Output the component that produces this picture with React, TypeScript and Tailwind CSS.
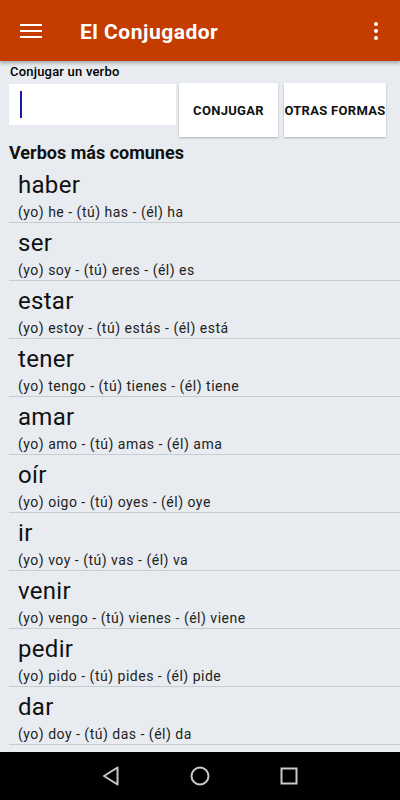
import React from "react";

const verbs = [
  { name: "haber", forms: "(yo) he - (tú) has - (él) ha" },
  { name: "ser", forms: "(yo) soy - (tú) eres - (él) es" },
  { name: "estar", forms: "(yo) estoy - (tú) estás - (él) está" },
  { name: "tener", forms: "(yo) tengo - (tú) tienes - (él) tiene" },
  { name: "amar", forms: "(yo) amo - (tú) amas - (él) ama" },
  { name: "oír", forms: "(yo) oigo - (tú) oyes - (él) oye" },
  { name: "ir", forms: "(yo) voy - (tú) vas - (él) va" },
  { name: "venir", forms: "(yo) vengo - (tú) vienes - (él) viene" },
  { name: "pedir", forms: "(yo) pido - (tú) pides - (él) pide" },
  { name: "dar", forms: "(yo) doy - (tú) das - (él) da" },
];

export default function App() {
  return (
    <div
      className="flex h-[800px] w-[400px] flex-col overflow-hidden bg-[#e8ecf0]"
      style={{ fontFamily: "Roboto, 'Noto Sans', sans-serif" }}
    >
      {/* toolbar */}
      <header className="relative z-10 flex h-[61px] shrink-0 items-center bg-[#c43c00] shadow-[0_2px_4px_rgba(0,0,0,0.3)]">
        <div className="ml-[20px] flex w-[22px] flex-col gap-[4px]">
          <span className="h-[2px] w-full bg-white" />
          <span className="h-[2px] w-full bg-white" />
          <span className="h-[2px] w-full bg-white" />
        </div>
        <h1 className="ml-[38px] mt-[3px] text-[21px] font-bold leading-none tracking-[0.5px] text-white">
          El Conjugador
        </h1>
        <div className="ml-auto mr-[22px] flex flex-col gap-[3px]">
          <span className="h-[4px] w-[4px] rounded-full bg-white" />
          <span className="h-[4px] w-[4px] rounded-full bg-white" />
          <span className="h-[4px] w-[4px] rounded-full bg-white" />
        </div>
      </header>

      {/* search */}
      <p className="ml-[10px] mt-[3px] text-[13px] font-medium leading-[16px] tracking-[0.2px] text-black">
        Conjugar un verbo
      </p>
      <div className="mt-[3px] flex items-start">
        <div className="ml-[9px] mt-[1px] h-[41px] w-[167px] bg-white pl-[11px] pt-[7px]">
          <span className="block h-[27px] w-[2px] bg-[#1a1aa8]" />
        </div>
        <button className="ml-[3px] flex h-[54px] w-[99px] items-center justify-center bg-white pt-[2px] text-[13px] font-bold tracking-[0.3px] text-[#111] shadow-[0_1px_2px_rgba(0,0,0,0.25)]">
          CONJUGAR
        </button>
        <button className="ml-[6px] flex h-[54px] w-[102px] items-center justify-center whitespace-nowrap bg-white pt-[2px] text-[13px] font-bold tracking-[0.3px] text-[#111] shadow-[0_1px_2px_rgba(0,0,0,0.25)]">
          OTRAS FORMAS
        </button>
      </div>

      <h2 className="ml-[9px] mt-[4px] text-[18px] font-bold leading-[24px] text-[#111]">Verbos más comunes</h2>

      {/* list */}
      <ul className="flex-1 overflow-hidden">
        {verbs.map((v) => (
          <li key={v.name} className="ml-[9px] h-[58px] border-b border-[#c8cdd2] pl-[9px] pt-[4px]">
            <div className="text-[24px] leading-[32px] tracking-[0.3px] text-[#111]">{v.name}</div>
            <div className="mt-[1px] text-[14px] leading-[20px] tracking-[0.5px] text-[#222]">{v.forms}</div>
          </li>
        ))}
      </ul>

      {/* nav bar */}
      <nav className="flex h-[48px] shrink-0 items-center gap-[70px] bg-black pl-[102px]">
        <svg width="18" height="20" viewBox="0 0 18 20">
          <path d="M15.5 1.5 L2 10 L15.5 18.5 Z" fill="none" stroke="#c8c8c8" strokeWidth="2" strokeLinejoin="round" />
        </svg>
        <svg width="20" height="20" viewBox="0 0 20 20">
          <circle cx="10" cy="10" r="8.5" fill="none" stroke="#c8c8c8" strokeWidth="2" />
        </svg>
        <svg width="18" height="18" viewBox="0 0 18 18">
          <rect x="1.5" y="1.5" width="15" height="15" fill="none" stroke="#c8c8c8" strokeWidth="2" />
        </svg>
      </nav>
    </div>
  );
}
